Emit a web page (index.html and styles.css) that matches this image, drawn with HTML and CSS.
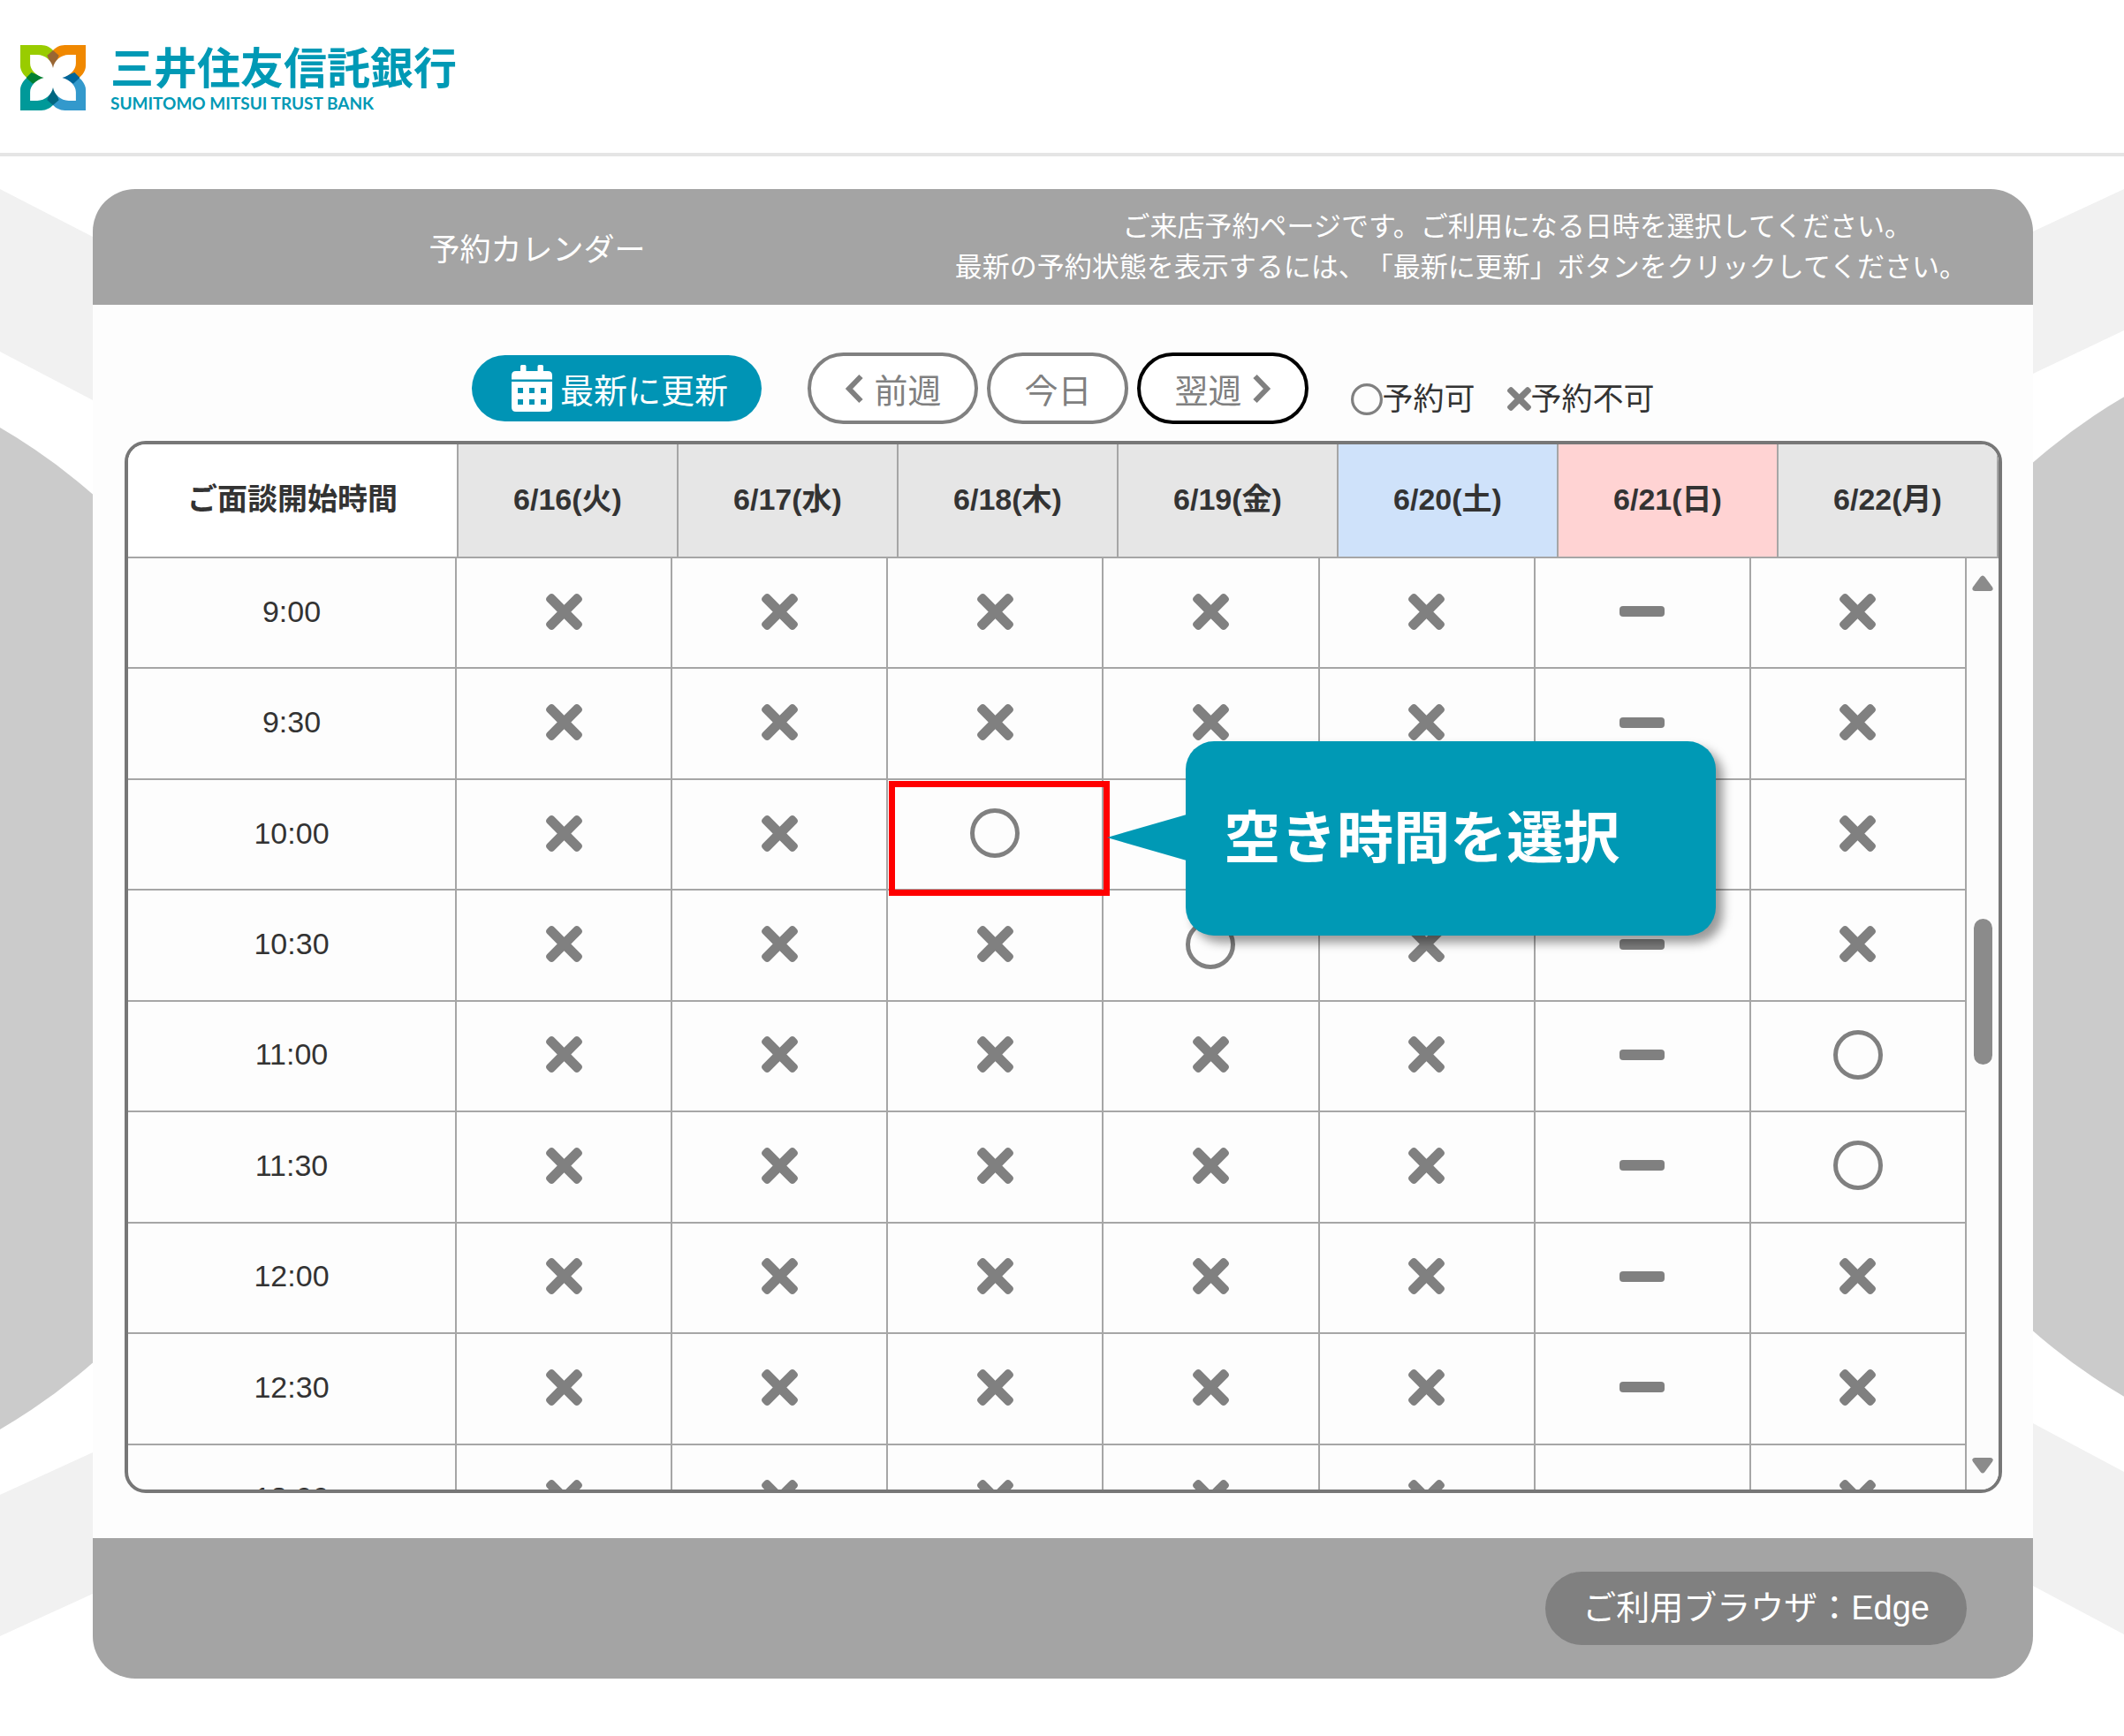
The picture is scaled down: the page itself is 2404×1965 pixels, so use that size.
FILE: index.html
```html
<!DOCTYPE html>
<html lang="ja">
<head>
    <meta charset="UTF-8">
    <meta name="viewport" content="width=device-width, initial-scale=1.0">
    <title>予約カレンダー</title>
    <link rel="stylesheet" href="styles.css">
</head>
<body>
    <svg class="symbols" aria-hidden="true">
        <symbol id="icon-x" viewBox="0 0 352 352">
            <path d="M243 176l100-100c12-12 12-32 0-44L321 9c-12-12-32-12-44 0L176 109 76 9C64-3 44-3 32 9L9 32c-12 12-12 32 0 44l100 100L9 276c-12 12-12 32 0 44l23 23c12 12 32 12 44 0l100-100 101 100c12 12 32 12 44 0l22-23c12-12 12-32 0-44z"/>
        </symbol>
        <symbol id="icon-circle" viewBox="0 0 56 56">
            <circle cx="28" cy="28" r="25.5" fill="none" stroke="currentColor" stroke-width="5"/>
        </symbol>
        <symbol id="icon-left" viewBox="0 0 22 34">
            <path d="M18.500 3L5 17l13.500 14" fill="none" stroke="currentColor" stroke-width="6"/>
        </symbol>
        <symbol id="icon-right" viewBox="0 0 22 34">
            <path d="M3.500 3L17 17 3.500 31" fill="none" stroke="currentColor" stroke-width="6"/>
        </symbol>
    </svg>
    <header class="site-header">
        <a class="logo" href="#">
            <svg class="logo-mark" viewBox="0 0 100 100" aria-hidden="true">
                <path fill="#99cc00" d="M0 0H32C40 0 46 4 50 8V50H10C4 45 0 38 0 32Z"/>
                <path fill="#f08800" d="M100 0H68C60 0 54 4 50 8V50H90C96 45 100 38 100 32Z"/>
                <path fill="#009999" d="M0 100H32C40 100 46 96 50 92V50H10C4 55 0 62 0 68Z"/>
                <path fill="#3399cc" d="M100 100H68C60 100 54 96 50 92V50H90C96 55 100 62 100 68Z"/>
                <path fill="#996633" d="M50 8L59 16 50 38 41 16Z"/>
                <path fill="#008033" d="M9 50L17 42 38 50 19 59Z"/>
                <path fill="#006699" d="M91 50L83 42 62 50 81 59Z"/>
                <path fill="#006680" d="M50 92L59 84 50 62 41 84Z"/>
                <path fill="#fff" d="M15 15H26C38 15 48 24 50 35C52 24 62 15 74 15H85V28C85 38 76 47 64 50C76 53 85 62 85 72V85H74C62 85 52 76 50 65C48 76 38 85 26 85H15V72C15 62 24 53 36 50C24 47 15 38 15 28Z"/>
            </svg>
            <span class="logo-text">
                <span class="logo-ja">三井住友信託銀行</span>
                <span class="logo-en">SUMITOMO MITSUI TRUST BANK</span>
            </span>
        </a>
    </header>
    <main class="stage">
        <svg class="backdrop backdrop-left" viewBox="0 0 105 1750" aria-hidden="true">
            <path fill="#f1f1f1" d="M0 37L105 91V276L0 221ZM0 1515L105 1467V1627L0 1675Z"/>
            <circle fill="#cbcbcb" cx="-328" cy="874" r="655"/>
        </svg>
        <svg class="backdrop backdrop-right" viewBox="0 0 105 1750" aria-hidden="true">
            <path fill="#f1f1f1" d="M0 85L105 36V196L0 246ZM0 1434L105 1490V1674L0 1618Z"/>
            <circle fill="#cbcbcb" cx="433" cy="838" r="655"/>
        </svg>
        <div class="card">
            <div class="card-header">
                <h1>予約カレンダー</h1>
                <div class="card-message">
                    <p class="message-first">ご来店予約ページです。ご利用になる日時を選択してください。</p>
                    <p>最新の予約状態を表示するには、「最新に更新」ボタンをクリックしてください。</p>
                </div>
            </div>
            <div class="card-body">
                <div class="toolbar">
                    <button class="refresh" type="button">
                        <svg viewBox="0 0 46 53" aria-hidden="true">
                            <path fill="#fff" fill-rule="evenodd" d="M10 1.500Q10 0 11.500 0H15Q16.500 0 16.500 1.500V7H29.500V1.500Q29.500 0 31 0H34.500Q36 0 36 1.500V7H41Q46 7 46 12V16.500H0V12Q0 7 5 7H10ZM0 19H46V48Q46 53 41 53H5Q0 53 0 48ZM7 26V32H13V26ZM20 26V32H26V26ZM33 26V32H39V26ZM7 39V45H13V39ZM20 39V45H26V39ZM33 39V45H39V39Z"/>
                        </svg>
                        最新に更新
                    </button>
                    <div class="week-nav">
                        <button type="button"><svg aria-hidden="true"><use href="#icon-left"/></svg>前週</button>
                        <button type="button">今日</button>
                        <button class="active" type="button">翌週<svg aria-hidden="true"><use href="#icon-right"/></svg></button>
                    </div>
                    <div class="legend">
                        <span><svg class="legend-circle" aria-hidden="true"><use href="#icon-circle"/></svg>予約可</span>
                        <span><svg class="legend-x" viewBox="0 0 27 27" aria-hidden="true"><use href="#icon-x"/></svg>予約不可</span>
                    </div>
                </div>
                <div class="calendar">
                    <table class="calendar-head">
                        <thead>
                            <tr>
                                <th class="time">ご面談開始時間</th>
                                <th>6/16(火)</th>
                                <th>6/17(水)</th>
                                <th>6/18(木)</th>
                                <th>6/19(金)</th>
                                <th class="saturday">6/20(土)</th>
                                <th class="sunday">6/21(日)</th>
                                <th>6/22(月)</th>
                            </tr>
                        </thead>
                    </table>
                    <div class="calendar-scroll">
                        <table class="calendar-body">
                            <tbody id="slots"></tbody>
                        </table>
                        <div class="scrollbar" aria-hidden="true">
                            <svg viewBox="0 0 24 18"><path d="M9.500 2Q12 -1 14.500 2L23 13.500Q25 17.500 21 18H3Q-1 17.500 1 13.500Z"/></svg>
                            <div class="scroll-thumb"></div>
                            <svg class="scroll-down" viewBox="0 0 24 18"><path d="M9.500 16Q12 19 14.500 16L23 4.500Q25 .5 21 0H3Q-1 .5 1 4.500Z"/></svg>
                        </div>
                    </div>
                </div>
            </div>
            <div class="card-footer">
                <span class="browser">ご利用ブラウザ：Edge</span>
            </div>
        </div>
    </main>
    <script>
        // x: full, o: available, -: closed
        const slots = [
            ['9:00', 'xxxxx-x'],
            ['9:30', 'xxxxx-x'],
            ['10:00', 'xxoxx-x'],
            ['10:30', 'xxxox-x'],
            ['11:00', 'xxxxx-o'],
            ['11:30', 'xxxxx-o'],
            ['12:00', 'xxxxx-x'],
            ['12:30', 'xxxxx-x'],
            ['13:00', 'xxxxx-x']
        ];
        const marks = {
            x: '<svg class="mark-x" role="img" aria-label="予約不可"><use href="#icon-x"/></svg>',
            o: '<button class="slot" type="button" aria-label="予約可"><svg><use href="#icon-circle"/></svg></button>',
            '-': '<span class="mark-none"></span>'
        };
        const guide = '<span class="guide-frame"></span><div class="guide-bubble">空き時間を選択</div>';

        document.getElementById('slots').innerHTML = slots.map(([time, row]) => {
            const cells = [...row].map((state, day) => {
                const target = time === '10:00' && day === 2;
                return `<td${target ? ' class="target"' : ''}>${marks[state]}${target ? guide : ''}</td>`;
            });
            return `<tr><th class="time">${time}</th>${cells.join('')}</tr>`;
        }).join('');
    </script>
</body>
</html>
```
FILE: styles.css
```css
* {
    box-sizing: border-box;
}
body {
    margin: 0;
    background: #fff;
    color: #333;
    font-family: "Liberation Sans", "Noto Sans CJK JP", sans-serif;
    font-size: 34px;
}
h1, p {
    margin: 0;
    font-weight: normal;
}
svg {
    display: block;
    flex: none;
    fill: currentColor;
}
.symbols {
    position: absolute;
    width: 0;
    height: 0;
}
button {
    margin: 0;
    font-family: inherit;
    cursor: pointer;
}

/* site header */
.site-header {
    height: 177px;
    padding: 51px 23px 0;
    border-bottom: 4px solid #e5e5e5;
}
.logo {
    display: inline-flex;
    gap: 28px;
    color: #0099b5;
    text-decoration: none;
}
.logo-mark {
    width: 74px;
    height: 74px;
}
.logo-text {
    display: flex;
    flex-direction: column;
}
.logo-ja {
    font-size: 49px;
    font-weight: bold;
    line-height: 54px;
}
.logo-en {
    font-family: Lato, sans-serif;
    font-size: 19px;
    font-weight: bold;
    line-height: 24px;
}

/* page background */
.stage {
    position: relative;
    padding: 37px 103px 65px 105px;
    overflow: hidden;
}
.backdrop {
    position: absolute;
    top: 0;
    width: 105px;
    height: 1750px;
}
.backdrop-left {
    left: 0;
}
.backdrop-right {
    right: -2px;
}

/* card */
.card {
    position: relative;
    border-radius: 48px;
    background: #fdfdfd;
    overflow: hidden;
}
.card-header {
    display: flex;
    align-items: center;
    height: 131px;
    background: #a4a4a4;
    color: #fff;
}
.card-header h1 {
    flex: 1;
    padding-left: 30px;
    font-size: 35px;
    text-align: center;
}
.card-message {
    padding-right: 75px;
    font-size: 31px;
    line-height: 46px;
    text-align: right;
    white-space: nowrap;
    text-spacing-trim: space-all;
}
.message-first {
    padding-right: 62px;
}
.card-body {
    padding: 54px 35px 51px 36px;
}
.card-footer {
    display: flex;
    justify-content: flex-end;
    height: 159px;
    padding: 38px 75px;
    background: #a4a4a4;
}
.browser {
    padding: 0 42px;
    border-radius: 42px;
    background: #808080;
    color: #fff;
    font-size: 38px;
    line-height: 83px;
}

/* toolbar */
.toolbar {
    display: flex;
    justify-content: center;
    align-items: center;
    margin-bottom: 19px;
}
.refresh {
    display: flex;
    align-items: center;
    justify-content: center;
    gap: 9px;
    width: 328px;
    height: 75px;
    margin-right: 52px;
    padding: 0 0 0 6px;
    border: none;
    border-radius: 38px;
    background: #0094b5;
    color: #fff;
    font-size: 38px;
}
.refresh svg {
    width: 46px;
    height: 53px;
}
.week-nav {
    display: flex;
    gap: 10px;
}
.week-nav button {
    display: flex;
    align-items: center;
    gap: 11px;
    height: 81px;
    padding: 0 38px;
    border: 4px solid #808080;
    border-radius: 41px;
    background: #fff;
    color: #808080;
    font-size: 38px;
}
.week-nav .active {
    border-color: #000;
}
.week-nav svg {
    width: 22px;
    height: 34px;
}
.legend {
    display: flex;
    gap: 36px;
    padding-top: 24px;
    margin-left: 48px;
    font-size: 35px;
    line-height: 44px;
}
.legend span {
    display: flex;
    align-items: center;
}
.legend svg {
    color: #808080;
}
.legend-circle {
    width: 36px;
    height: 36px;
}
.legend-x {
    width: 27px;
    height: 27px;
}

/* calendar */
.calendar {
    border: 4px solid #777;
    border-radius: 24px;
    overflow: hidden;
}
table {
    width: 100%;
    border-spacing: 0;
    table-layout: fixed;
}
th, td {
    padding: 0 0 3px;
    border: solid #a6a6a6;
    border-width: 0 2px 2px 0;
    text-align: center;
}
.time {
    width: 372px;
}
.calendar-head th {
    height: 129px;
    padding-bottom: 8px;
    background: #e6e6e6;
}
.calendar-head .time {
    width: 374px;
    background: #fff;
}
.calendar-head .saturday {
    background: #cfe2fa;
}
.calendar-head .sunday {
    background: #ffd3d3;
}
.calendar-scroll {
    display: flex;
    align-items: flex-start;
    height: 1054px;
    overflow: hidden;
}
.calendar-body {
    flex: 1;
    height: 1129px;
}
.calendar-body tr {
    height: 125px;
}
.calendar-body th {
    font-weight: normal;
}
.calendar-body td {
    color: #808080;
}
.mark-x {
    width: 41px;
    height: 41px;
    margin: 0 auto;
}
.mark-none {
    display: block;
    width: 51px;
    height: 12px;
    margin: 0 auto;
    border-radius: 4px;
    background: #808080;
}
.slot {
    display: block;
    margin: 0 auto;
    padding: 0;
    border: none;
    background: none;
    color: #808080;
}
.slot svg {
    width: 56px;
    height: 56px;
}
.scrollbar {
    display: flex;
    flex-direction: column;
    align-items: center;
    width: 36px;
    height: 1054px;
    padding: 19px 0 18px;
    background: #fcfcfc;
    color: #8b8b8b;
}
.scrollbar svg {
    width: 24px;
    height: 18px;
}
.scroll-thumb {
    width: 21px;
    height: 165px;
    margin-top: 371px;
    border-radius: 11px;
    background: #8b8b8b;
}
.scroll-down {
    margin-top: auto;
}

/* guide over the slot to pick */
.target {
    position: relative;
}
.guide-frame {
    position: absolute;
    top: 1px;
    left: 1px;
    width: 250px;
    height: 130px;
    border: 7px solid #f00;
}
.guide-bubble {
    position: absolute;
    z-index: 1;
    top: -44px;
    left: 337px;
    width: 600px;
    padding-left: 43px;
    border-radius: 32px;
    background: #0099b5;
    box-shadow: 8px 8px 12px rgba(0, 0, 0, 0.4);
    color: #fff;
    font-size: 64px;
    font-weight: bold;
    line-height: 220px;
    text-align: left;
    white-space: nowrap;
}
.guide-bubble::before {
    content: "";
    position: absolute;
    top: 83px;
    left: -89px;
    border: solid transparent;
    border-width: 26px 90px 26px 0;
    border-right-color: #0099b5;
}
```
